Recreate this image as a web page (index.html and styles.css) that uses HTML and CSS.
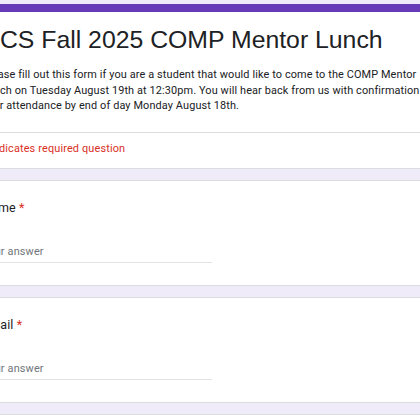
FILE: index.html
```html
<!DOCTYPE html>
<html lang="en">
<head>
    <meta charset="UTF-8">
    <meta name="viewport" content="width=device-width, initial-scale=1.0">
    <title>CCS Fall 2025 COMP Mentor Lunch</title>
    <link rel="stylesheet" href="styles.css">
</head>
<body>
    <div class="form">
        <div class="card title-card">
            <div class="title-block">
                <h1>CCS Fall 2025 COMP Mentor Lunch</h1>
                <p class="description">Please fill out this form if you are a student that would like to come to the COMP Mentor Lunch on Tuesday August 19th at 12:30pm. You will hear back from us with confirmation of your attendance by end of day Monday August 18th.</p>
            </div>
            <p class="required-note">* Indicates required question</p>
        </div>

        <div class="card question">
            <label class="label" for="name">Name <span class="star">*</span></label>
            <input class="answer" id="name" type="text" placeholder="Your answer">
        </div>

        <div class="card question">
            <label class="label" for="email">Email <span class="star">*</span></label>
            <input class="answer" id="email" type="text" placeholder="Your answer">
        </div>

        <div class="card question"></div>
    </div>
</body>
</html>
```

FILE: styles.css
```css
html {
    overflow: hidden;
}
body {
    margin: 0;
    padding-top: 4px;
    background-color: #f0ebf8;
    font-family: Roboto, "Liberation Sans", sans-serif;
    color: #202124;
}
.form {
    width: 499px;
    margin-left: -38px;
}
.card {
    background-color: #fff;
    border: 1px solid #dadce0;
    border-radius: 6px;
    margin-bottom: 11px;
}
.title-card {
    border-top: 8px solid #673ab7;
    border-radius: 6px;
}
.title-block {
    padding: 12px 19px 18px;
    border-bottom: 1px solid #dadce0;
}
h1 {
    margin: 0;
    font-family: "Liberation Sans", Arial, sans-serif;
    font-weight: normal;
    font-size: 24.8px;
    line-height: 31px;
    color: #202124;
}
.description {
    margin: 12px 0 0;
    font-size: 10.9px;
    line-height: 15.6px;
    letter-spacing: 0.12px;
}
.required-note {
    margin: 0;
    padding: 8px 19px 11px;
    font-size: 10.9px;
    line-height: 16px;
    letter-spacing: 0.15px;
    color: #d93025;
}
.question {
    padding: 18px 19px 22px;
}
.label {
    display: block;
    font-size: 12.5px;
    line-height: 18px;
    letter-spacing: 0.1px;
}
.star {
    color: #d93025;
}
.answer {
    display: block;
    width: 230px;
    margin-top: 27px;
    padding: 0 0 2px;
    border: none;
    border-bottom: 1px solid #e3e3e3;
    font-family: Roboto, "Liberation Sans", sans-serif;
    font-size: 10.9px;
    line-height: 16px;
    letter-spacing: 0.15px;
    color: #202124;
    outline: none;
}
.answer::placeholder {
    color: #70757a;
}
```
